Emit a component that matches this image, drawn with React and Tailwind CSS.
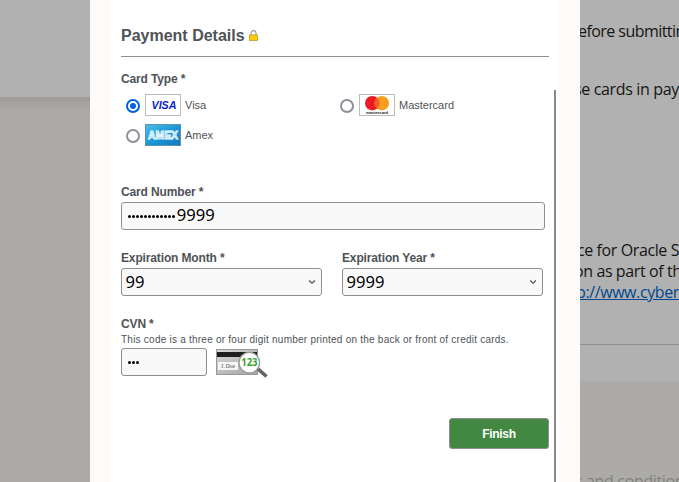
import React from "react";

function Lock() {
  return (
    <svg className="ml-[4px] h-[11px] w-[9px]" viewBox="0 0 9 11">
      <path d="M2 5V3.1a2.5 2.5 0 0 1 5 0V5" fill="none" stroke="#999" strokeWidth="1.1" />
      <rect x=".5" y="4.9" width="8" height="5.6" fill="#fc0" stroke="#b89a45" strokeWidth=".8" />
    </svg>
  );
}

function VisaLogo() {
  return (
    <svg className="h-[22px] w-[36px]" viewBox="0 0 36 22">
      <rect x=".5" y=".5" width="35" height="21" fill="#fff" stroke="#bbb" />
      <text x="6.5" y="15" textLength="25" lengthAdjust="spacingAndGlyphs" fontFamily="Liberation Sans, sans-serif" fontSize="11.5" fontWeight="700" fontStyle="italic" fill="#0a22c4">VISA</text>
    </svg>
  );
}

function MastercardLogo() {
  return (
    <svg className="h-[22px] w-[36px]" viewBox="0 0 36 22">
      <rect x=".5" y=".5" width="35" height="21" fill="#fff" stroke="#bbb" />
      <circle cx="13.3" cy="9.2" r="7.3" fill="#eb1b26" />
      <circle cx="22.8" cy="9.2" r="7.3" fill="#f79e1f" />
      <path d="M18.05 3.6a7.3 7.3 0 0 1 0 11.2a7.3 7.3 0 0 1 0-11.2z" fill="#f26122" />
      <text x="7" y="20" textLength="22" lengthAdjust="spacingAndGlyphs" fontFamily="Liberation Sans, sans-serif" fontSize="4.2" fontWeight="700" fill="#222">mastercard</text>
    </svg>
  );
}

function AmexLogo() {
  return (
    <svg className="h-[22px] w-[36px]" viewBox="0 0 36 22">
      <defs>
        <linearGradient id="amex" x1="0" y1="0" x2="1" y2="1">
          <stop offset="0" stopColor="#4fc0ea" />
          <stop offset=".5" stopColor="#1b98d5" />
          <stop offset="1" stopColor="#1478bd" />
        </linearGradient>
      </defs>
      <rect x=".5" y=".5" width="35" height="21" fill="url(#amex)" stroke="#5b93b0" />
      <text x="3" y="14.5" textLength="30" lengthAdjust="spacingAndGlyphs" fontFamily="Liberation Sans, sans-serif" fontSize="10" fontWeight="700" fill="#3aa7dc" stroke="#f0faff" strokeWidth=".9">AMEX</text>
    </svg>
  );
}

function CvnPicture() {
  return (
    <svg className="ml-[9px] mt-[1px] h-[29px] w-[53px]" viewBox="0 0 53 29">
      <defs>
        <linearGradient id="card" x1="0" y1="0" x2="1" y2="1">
          <stop offset="0" stopColor="#d8d8d8" />
          <stop offset="1" stopColor="#a4a4a4" />
        </linearGradient>
      </defs>
      <rect x=".5" y=".5" width="41" height="25" fill="url(#card)" stroke="#999" />
      <rect x="1" y="3" width="40" height="5" fill="#1c1f1e" />
      <rect x="2" y="13" width="20" height="8" fill="#f5f5f5" />
      <text x="5" y="18.8" textLength="14" lengthAdjust="spacingAndGlyphs" fontFamily="Liberation Serif, serif" fontSize="6" fill="#444">J. Doe</text>
      <path d="M41.5 19.5l9 8" stroke="#646464" strokeWidth="3.6" />
      <circle cx="33.3" cy="13.7" r="10.3" fill="#fff" stroke="#9c9c9c" strokeWidth="1.3" />
      <text x="25.2" y="17.3" textLength="16.4" lengthAdjust="spacingAndGlyphs" fontFamily="Open Sans, sans-serif" fontSize="10.5" fontWeight="700" fill="#36a136">123</text>
    </svg>
  );
}

function CardOption({ checked, label, children }) {
  return (
    <label className="flex h-[22px] items-center pl-[5px] text-[11px] leading-[22px]">
      <span className={checked
        ? "mt-[2px] mr-[5px] flex size-[14px] items-center justify-center rounded-full border-2 border-[#0060df]"
        : "mt-[2px] mr-[5px] flex size-[14px] items-center justify-center rounded-full border-2 border-[#8f8f9d]"}>
        {checked && <span className="size-[6px] rounded-full bg-[#0060df]" />}
      </span>
      {children}
      <span className="ml-[4px]">{label}</span>
    </label>
  );
}

function Label({ children }) {
  return <div className="h-[16px] text-[12px] leading-[16px] font-bold tracking-[-0.14px] whitespace-nowrap">{children}</div>;
}

function Dots({ count }) {
  return (
    <span className="flex">
      {Array.from({ length: count }, (_, i) => (
        <span key={i} className="flex w-[4px] justify-start"><span className="size-[3px] rounded-full bg-black" /></span>
      ))}
    </span>
  );
}

function Select({ label, value }) {
  return (
    <div className="w-[201px]">
      <Label>{label}</Label>
      <div className="mt-[2px] flex h-[28px] items-center justify-between rounded-[3px] border border-[#8f8f8f] bg-[#f9f9f9] pr-[5px] pl-[3.5px] font-['Noto_Sans',sans-serif] text-[16.6px] leading-[26px] text-black">
        <span>{value}</span>
        <svg className="h-[8px] w-[8px]" viewBox="0 0 8 8"><path d="M1.2 2.5L4 5.3l2.8-2.8" fill="none" stroke="#444" strokeWidth="1.1" /></svg>
      </div>
    </div>
  );
}

export default function App() {
  return (
    <div className="flex h-[482px] w-[679px] overflow-hidden bg-[#acaba9] font-['Liberation_Sans',Arial,sans-serif] text-[#4f5357]">
      <aside className="w-[90px] shrink-0">
        <div className="h-[97px] bg-[#b1b1b1]" />
        <div className="h-[16px] bg-linear-to-b from-[#9d9c9a] to-[#acaba9]" />
      </aside>

      <main className="flex w-[490px] shrink-0 justify-center bg-[#fcfbf9]">
        <div className="flex h-full w-[448px] bg-white pl-[10px]">
          <form className="w-[428px] shrink-0">
            <h1 className="flex h-[57px] items-center border-b border-[#8f8f8f] pt-[15px] text-[16px] font-bold">
              Payment Details<Lock />
            </h1>
            <div className="mt-[14px]"><Label>Card Type *</Label></div>
            <div className="mt-[7px] grid grid-cols-2 gap-y-[8px]">
              <CardOption checked label="Visa"><VisaLogo /></CardOption>
              <CardOption label="Mastercard"><MastercardLogo /></CardOption>
              <CardOption label="Amex"><AmexLogo /></CardOption>
            </div>
            <div className="mt-[38px]"><Label>Card Number *</Label></div>
            <div className="mt-[2px] flex h-[28px] w-[424px] items-center rounded-[3px] border border-[#8f8f8f] bg-[#f9f9f9] pl-[6px] font-['Noto_Sans',sans-serif] text-[16.6px] leading-[26px] text-black">
              <Dots count={12} /><span className="-mt-[2px] ml-[0.7px]">9999</span>
            </div>
            <div className="mt-[20px] flex gap-[20px]">
              <Select label="Expiration Month *" value="99" />
              <Select label="Expiration Year *" value="9999" />
            </div>
            <div className="mt-[20px]"><Label>CVN *</Label></div>
            <p className="h-[14px] text-[10px] leading-[15px] tracking-[0.235px] whitespace-nowrap">
              This code is a three or four digit number printed on the back or front of credit cards.
            </p>
            <div className="mt-[2px] flex">
              <div className="flex h-[28px] w-[86px] items-center rounded-[3px] border border-[#8f8f8f] bg-[#f9f9f9] pl-[6px]"><Dots count={3} /></div>
              <CvnPicture />
            </div>
            <div className="mt-[40px] flex justify-end">
              <button type="button" className="h-[31px] w-[100px] rounded-[3px] border border-[#8f8f8f] bg-[#428842] text-[12px] font-bold tracking-[-0.3px] text-white">Finish</button>
            </div>
          </form>
          <div className="mt-[90px] ml-[5px] h-[392px] w-[2px] bg-[#888]" />
        </div>
      </main>

      <section className="w-[99px] shrink-0 overflow-hidden font-['Open_Sans','Noto_Sans',sans-serif] text-[16px] whitespace-nowrap text-[#161513]">
        <div className="h-[381px] bg-[#b1b1b1] pt-[21px]">
          <p className="ml-[-2px] leading-[21px] tracking-[-0.55px]">efore submittin</p>
          <p className="mt-[37px] ml-[-6px] leading-[21px] tracking-[-0.35px]">se cards in pay</p>
          <p className="mt-[140px] ml-[-3px] leading-[21px] tracking-[-0.4px]">ce for Oracle S</p>
          <p className="ml-[-6px] leading-[21px] tracking-[-0.4px]">on as part of th</p>
          <p className="ml-[-4px] leading-[21px] tracking-[-0.4px] text-[#00488f] underline">p://www.cyber</p>
          <div className="mt-[41px] h-px bg-[#8f8f8f]" />
        </div>
        <div className="h-[101px] overflow-hidden bg-[#acaba9] pt-[90px]">
          <p className="ml-[-5px] leading-[21px] tracking-[-0.35px] text-[#81807e]">s and condition</p>
        </div>
      </section>
    </div>
  );
}
